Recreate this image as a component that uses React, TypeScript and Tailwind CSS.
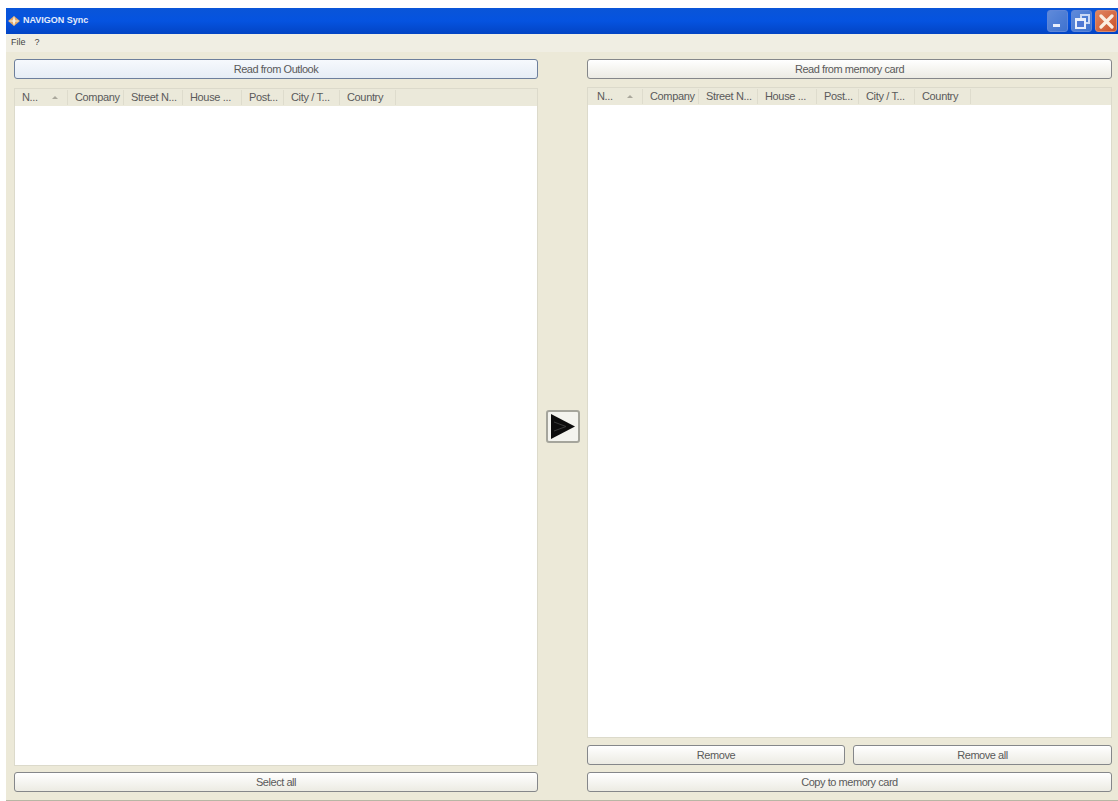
const font = { fontFamily: '"Liberation Sans", Arial, sans-serif' };

const columns = [
  { label: "N...", width: "w-[53px]", sort: true },
  { label: "Company", width: "w-[56px]" },
  { label: "Street N...", width: "w-[59px]" },
  { label: "House ...", width: "w-[59px]" },
  { label: "Post...", width: "w-[42px]" },
  { label: "City / T...", width: "w-[56px]" },
  { label: "Country", width: "w-[56px]" },
];

function Btn({ children, focus, className = "" }: { children: React.ReactNode; focus?: boolean; className?: string }) {
  return (
    <button
      className={
        "flex h-[20px] items-center justify-center rounded-[3px] border text-[11px] tracking-[-0.45px] text-[#5a5a5a] bg-gradient-to-b " +
        (focus ? "border-[#6d7f9c] from-[#f6f9fd] to-[#e6edf5] " : "border-[#85878a] from-white to-[#ecebe3] ") +
        className
      }
    >
      {children}
    </button>
  );
}

function Table({ className = "", headerClass = "" }: { className?: string; headerClass?: string }) {
  return (
    <div className={"flex flex-col border border-[#dcdacb] bg-white " + className}>
      <div className={"flex h-[17px] shrink-0 items-center bg-[#ebe9da] text-[11px] tracking-[-0.35px] text-[#5a5a5a] " + headerClass}>
        {columns.map((c) => (
          <div key={c.label} className={"flex h-[15px] items-center justify-between border-r border-[#dedccd] pl-[7px] pr-[9px] whitespace-nowrap " + c.width}>
            <span>{c.label}</span>
            {c.sort && <span className="h-0 w-0 border-x-[3px] border-b-[3px] border-x-transparent border-b-[#aaa89c]" />}
          </div>
        ))}
      </div>
      <div className="flex-1 bg-white" />
    </div>
  );
}

export default function App() {
  return (
    <div style={font} className="flex h-[801px] w-[1118px] flex-col overflow-hidden bg-white pl-[6px] pt-[8px]">
      <div className="flex h-[26px] shrink-0 items-center justify-between bg-gradient-to-b from-[#0a55d8] via-[#0553e0] to-[#0344c4] pl-[2px] pr-[1px]">
        <div className="flex items-center gap-[3px]">
          <svg width="12" height="10" viewBox="0 0 12 10">
            <path d="M6 0L12 5L6 10L0 5z" fill="#e3a868" />
            <path d="M6 0L7.5 5L6 10L4.5 5z" fill="#f7efe0" />
            <path d="M1.5 5H10.5" stroke="#f7efe0" strokeWidth="1" />
          </svg>
          <span className="text-[9px] font-bold text-[#e4ecfa]">NAVIGON Sync</span>
        </div>
        <div className="flex items-center gap-[3px]">
          <div className="relative h-[22px] w-[21px] rounded-[3px] border border-[#5f86d8] bg-gradient-to-br from-[#5f8ada] to-[#3f72cf]">
            <div className="absolute bottom-[4px] left-[5px] h-[3px] w-[7px] bg-[#e8eefb]" />
          </div>
          <div className="relative h-[22px] w-[21px] rounded-[3px] border border-[#5f86d8] bg-gradient-to-br from-[#5f8ada] to-[#3f72cf]">
            <div className="absolute left-[8px] top-[3px] h-[10px] w-[10px] border-[2px] border-[#c9d8f5]" />
            <div className="absolute left-[3px] top-[7px] h-[11px] w-[11px] border-[2px] border-t-[3px] border-[#e8eefb] bg-[#4f78d4]" />
          </div>
          <div className="flex h-[22px] w-[22px] items-center justify-center rounded-[3px] border border-[#d98a6c] bg-gradient-to-br from-[#e08560] to-[#c94f28]">
            <svg width="15" height="15" viewBox="0 0 15 15">
              <path d="M2 2l11 11M13 2L2 13" stroke="#fbeee0" strokeWidth="3.2" strokeLinecap="round" />
            </svg>
          </div>
        </div>
      </div>

      <div className="flex min-h-0 flex-1 flex-col border-b border-[#b8b6a4] bg-[#ece9d8]">
        <div className="flex h-[18px] shrink-0 items-center gap-[9px] bg-[#f0eee3] pl-[5px] text-[9px] text-[#444]">
          <span>File</span>
          <span>?</span>
        </div>
        <div className="flex min-h-0 flex-1 pl-[8px] pr-[6px] pt-[7px]">
          <div className="flex w-[524px] flex-col">
            <Btn focus className="shrink-0">Read from Outlook</Btn>
            <Table className="mt-[9px] flex-1" />
            <Btn className="mb-[8px] mt-[6px] shrink-0">Select all</Btn>
          </div>
          <div className="flex w-[49px] shrink-0 items-center justify-center pb-[7px]">
            <div className="flex h-[33px] w-[34px] items-center justify-center rounded-[3px] border-2 border-[#a5a59c] bg-[#f3f3ee]">
              <svg width="27" height="27" viewBox="0 0 27 27">
                <path d="M2 1L26 13.5L2 26z" fill="#0c0c0c" />
                <path d="M5 9L17 13.5L5 18" fill="none" stroke="#3a3a3a" strokeWidth="1" />
              </svg>
            </div>
          </div>
          <div className="flex w-[525px] flex-col">
            <Btn className="shrink-0">Read from memory card</Btn>
            <Table className="mt-[8px] flex-1" headerClass="pl-[2px]" />
            <div className="mt-[7px] flex shrink-0 gap-[8px]">
              <Btn className="w-[258px]">Remove</Btn>
              <Btn className="flex-1">Remove all</Btn>
            </div>
            <Btn className="mb-[8px] mt-[7px] shrink-0">Copy to memory card</Btn>
          </div>
        </div>
      </div>
    </div>
  );
}
